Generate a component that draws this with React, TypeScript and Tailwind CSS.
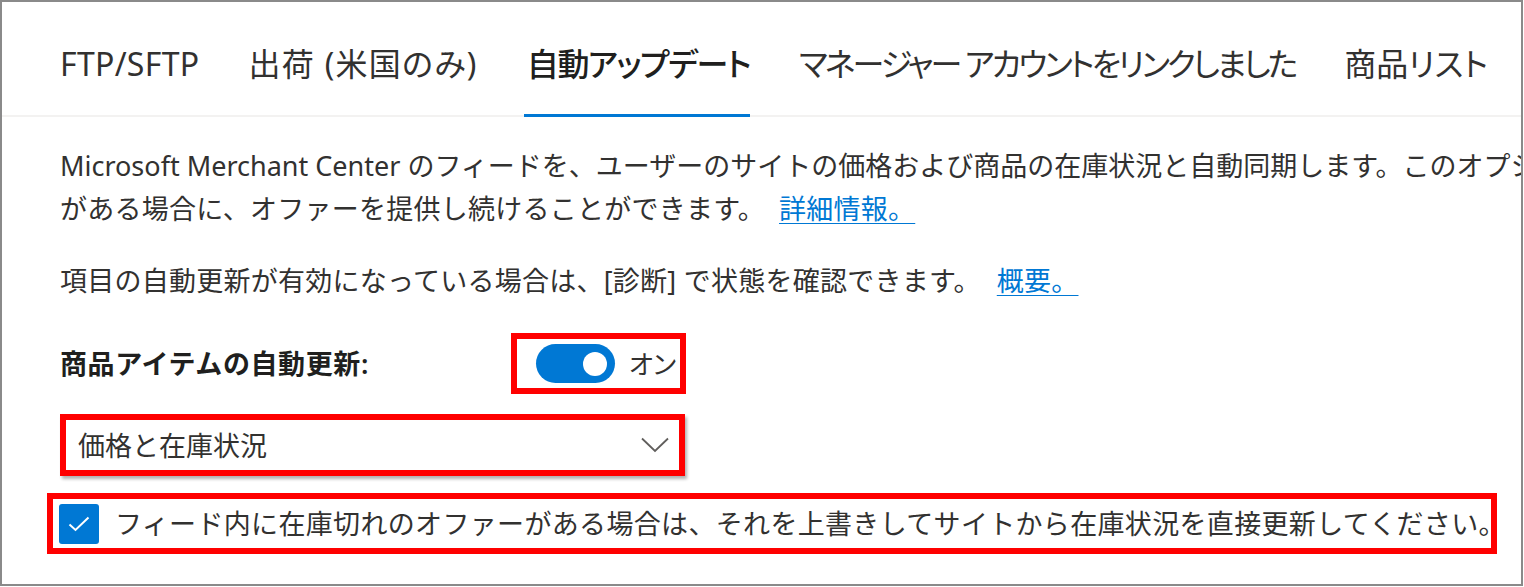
import React from "react";

const font = "font-['Noto_Sans','Noto_Sans_CJK_JP',sans-serif]";

function Tab({ label, active, track }: { label: string; active?: boolean; track: string }) {
  return (
    <div className="relative flex h-full items-center pt-[10px]">
      <span
        className={`whitespace-nowrap text-[32px] leading-none [font-feature-settings:'palt'] ${track} ${
          active ? "font-medium text-[#201f1e]" : "text-[#323130]"
        }`}
      >
        {label}
      </span>
      {active && (
        <div className="absolute bottom-[-2px] left-[-3px] right-0 h-[3px] bg-[#0078d4]" />
      )}
    </div>
  );
}

export default function App() {
  return (
    <div className={`h-[587px] w-[1524px] bg-white ${font}`}>
      <div className="h-[586px] w-[1523px] overflow-hidden border-2 border-[#8a8a8a] bg-white">
        {/* Tabs */}
        <div className="flex h-[115px] items-stretch gap-[49px] border-b-2 border-[#f3f2f1] pl-[58px]">
          <Tab label="FTP/SFTP" track="tracking-[0.3px]" />
          <Tab label="出荷 (米国のみ)" track="tracking-[1.3px]" />
          <Tab label="自動アップデート" active track="tracking-[-1.4px]" />
          <Tab label="マネージャー アカウントをリンクしました" track="tracking-[-2.9px]" />
          <Tab label="商品リスト" track="tracking-[0px]" />
        </div>

        <div className="pl-[58px] text-[27px] leading-[43px] text-[#323130]">
          <div className="mt-[27px]">
            <div className="whitespace-nowrap">
              Microsoft Merchant Center のフィードを、ユーザーのサイトの価格および商品の在庫状況と自動同期します。このオプションは、在庫切れ
            </div>
            <div className="whitespace-nowrap tracking-[0.25px]">
              がある場合に、オファーを提供し続けることができます。
              <span className="ml-[14px] text-[#0078d4] underline decoration-[1px] underline-offset-[4px]">
                詳細情報。
              </span>
            </div>
          </div>

          <div className="mt-[29px] whitespace-nowrap tracking-[0.25px]">
            項目の自動更新が有効になっている場合は、[診断] で状態を確認できます。
            <span className="ml-[16px] text-[#0078d4] underline decoration-[1px] underline-offset-[4px]">
              概要。
            </span>
          </div>

          {/* Toggle row */}
          <div className="mt-[31px] flex items-center">
            <div className="w-[451px] whitespace-nowrap font-semibold tracking-[0.6px] text-[#201f1e]">
              商品アイテムの自動更新:
            </div>
            <div className="flex h-[61px] w-[175px] shrink-0 items-center border-[6px] border-[#ff0000] pl-[19px]">
              <div className="flex h-[39px] w-[79px] shrink-0 items-center justify-end rounded-full bg-[#0078d4] pr-[8px]">
                <div className="h-[24px] w-[24px] rounded-full bg-white" />
              </div>
              <span className="ml-[14px] whitespace-nowrap text-[26px] leading-none [font-feature-settings:'palt']">
                オン
              </span>
            </div>
          </div>

          {/* Dropdown */}
          <div className="mt-[20px] flex h-[62px] w-[625px] items-center justify-between border-[6px] border-[#ff0000] pl-[12px] pr-[10px] shadow-[2px_3px_3px_rgba(0,0,0,0.3)]">
            <span className="leading-none">価格と在庫状況</span>
            <svg width="28" height="16" viewBox="0 0 28 16" fill="none">
              <path d="M1 1.5 L14 14 L27 1.5" stroke="#605e5c" strokeWidth="1.8" />
            </svg>
          </div>
        </div>

        {/* Checkbox */}
        <div className="ml-[45px] mt-[17px] flex h-[61px] w-[1450px] items-center border-[6px] border-[#ff0000] pl-[6px] text-[27px] text-[#323130]">
          <div className="flex h-[40px] w-[40px] shrink-0 items-center justify-center rounded-[3px] bg-[#0078d4]">
            <svg width="24" height="18" viewBox="0 0 24 18" fill="none">
              <path d="M2.5 9.5 L8.5 15 L21.5 2.5" stroke="white" strokeWidth="2" />
            </svg>
          </div>
          <span className="ml-[16px] whitespace-nowrap leading-none tracking-[0.33px]">
            フィード内に在庫切れのオファーがある場合は、それを上書きしてサイトから在庫状況を直接更新してください。
          </span>
        </div>
      </div>
    </div>
  );
}
